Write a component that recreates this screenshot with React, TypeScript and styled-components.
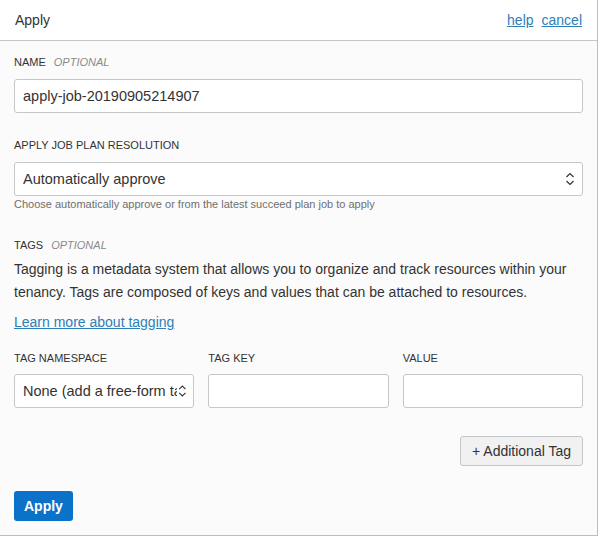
import React from 'react';
import styled, { createGlobalStyle } from 'styled-components';

const GlobalStyle = createGlobalStyle`
  body {
    margin: 0;
    font-family: "Liberation Sans", Arial, sans-serif;
    background: #ffffff;
  }
`;

const Panel = styled.div`
  width: 597px;
  height: 535px;
  border-right: 1px solid #b9bec4;
  border-bottom: 1px solid #b9bec4;
  background: #fbfbfb;
  display: flex;
  flex-direction: column;
`;

const Header = styled.div`
  height: 40px;
  flex-shrink: 0;
  display: flex;
  align-items: center;
  justify-content: space-between;
  padding: 0 15px;
  background: #ffffff;
  border-bottom: 1px solid #c3c7cb;
`;

const Title = styled.span`
  font-size: 14px;
  color: #333333;
`;

const HeaderLinks = styled.div`
  display: flex;
  gap: 8px;
`;

const Link = styled.a`
  font-size: 14px;
  color: #2d7fb6;
  text-decoration: underline;
  cursor: pointer;
`;

const Body = styled.div`
  padding: 13px 14px 0 14px;
  display: flex;
  flex-direction: column;
`;

const Label = styled.div<{ $top?: number }>`
  font-size: 11px;
  line-height: 16px;
  color: #333333;
  text-transform: uppercase;
  margin-top: ${(p) => p.$top ?? 0}px;
  margin-bottom: 9px;
`;

const Optional = styled.span`
  font-style: italic;
  color: #8a8a8a;
  margin-left: 8px;
`;

const Input = styled.div`
  box-sizing: border-box;
  height: 34px;
  border: 1px solid #c4c7ca;
  border-radius: 3px;
  background: #ffffff;
  display: flex;
  align-items: center;
  padding: 0 8px;
  font-size: 14.5px;
  color: #333333;
  white-space: nowrap;
  overflow: hidden;
`;

const SelectBox = styled(Input)`
  justify-content: space-between;
  padding-right: 6px;
`;

const SelectText = styled.span`
  overflow: hidden;
  white-space: nowrap;
`;

const Helper = styled.div`
  font-size: 11px;
  line-height: 14px;
  color: #6f6f6f;
  margin-top: 1px;
`;

const Paragraph = styled.p`
  margin: 5px 0 0;
  font-size: 14px;
  line-height: 23px;
  color: #333333;
`;

const LearnLink = styled(Link)`
  line-height: 23px;
  margin-top: 7px;
  align-self: flex-start;
`;

const TagGrid = styled.div`
  display: grid;
  grid-template-columns: repeat(3, 1fr);
  column-gap: 14px;
  margin-top: 16px;
`;

const TagCol = styled.div`
  display: flex;
  flex-direction: column;
  min-width: 0;
`;

const TagLabel = styled(Label)`
  margin-bottom: 8px;
`;

const ActionsRow = styled.div`
  display: flex;
  justify-content: flex-end;
  margin-top: 28px;
`;

const SecondaryButton = styled.button`
  height: 30px;
  padding: 0 11px;
  font-family: inherit;
  font-size: 14px;
  color: #333333;
  background: #f1f1f1;
  border: 1px solid #c4c7ca;
  border-radius: 3px;
`;

const PrimaryButton = styled.button`
  align-self: flex-start;
  height: 30px;
  padding: 0 10px;
  margin-top: 25px;
  font-family: inherit;
  font-size: 14px;
  font-weight: bold;
  color: #ffffff;
  background: #0a72c8;
  border: none;
  border-radius: 3px;
`;

const Chevrons = () => (
  <svg width="12" height="16" viewBox="0 0 12 16" fill="none" stroke="#333" strokeWidth="1.2">
    <path d="M2.5 6 L6 2.5 L9.5 6" />
    <path d="M2.5 10 L6 13.5 L9.5 10" />
  </svg>
);

export default function App() {
  return (
    <>
      <GlobalStyle />
      <Panel>
        <Header>
          <Title>Apply</Title>
          <HeaderLinks>
            <Link>help</Link>
            <Link>cancel</Link>
          </HeaderLinks>
        </Header>
        <Body>
          <Label>
            Name<Optional>OPTIONAL</Optional>
          </Label>
          <Input>apply-job-20190905214907</Input>

          <Label $top={24}>Apply job plan resolution</Label>
          <SelectBox>
            <SelectText>Automatically approve</SelectText>
            <Chevrons />
          </SelectBox>
          <Helper>Choose automatically approve or from the latest succeed plan job to apply</Helper>

          <Label $top={26} style={{ marginBottom: 0 }}>
            Tags<Optional>OPTIONAL</Optional>
          </Label>
          <Paragraph>
            Tagging is a metadata system that allows you to organize and track resources within your
            tenancy. Tags are composed of keys and values that can be attached to resources.
          </Paragraph>
          <LearnLink>Learn more about tagging</LearnLink>

          <TagGrid>
            <TagCol>
              <TagLabel>Tag namespace</TagLabel>
              <SelectBox>
                <SelectText>None (add a free-form tag)</SelectText>
                <Chevrons />
              </SelectBox>
            </TagCol>
            <TagCol>
              <TagLabel>Tag key</TagLabel>
              <Input />
            </TagCol>
            <TagCol>
              <TagLabel>Value</TagLabel>
              <Input />
            </TagCol>
          </TagGrid>

          <ActionsRow>
            <SecondaryButton>+ Additional Tag</SecondaryButton>
          </ActionsRow>

          <PrimaryButton>Apply</PrimaryButton>
        </Body>
      </Panel>
    </>
  );
}
